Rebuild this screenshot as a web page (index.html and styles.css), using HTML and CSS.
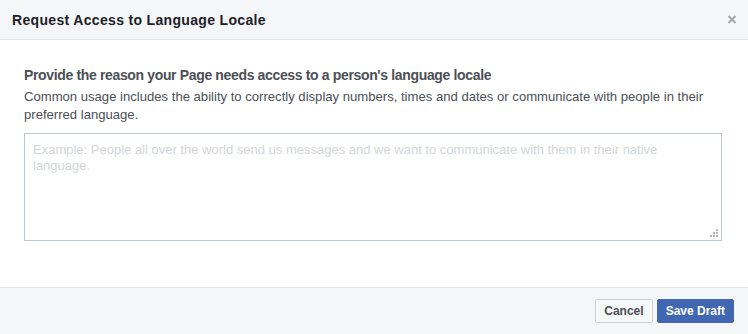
FILE: index.html
```html
<!DOCTYPE html>
<html lang="en">

<head>
    <meta charset="UTF-8">
    <title>Request Access to Language Locale</title>
    <link rel="stylesheet" href="styles.css">
</head>

<body>
    <div class="dialog">
        <div class="dialog-header">
            <span class="dialog-title">Request Access to Language Locale</span>
            <svg class="dialog-close" width="10" height="9" viewBox="0 0 10 9">
                <path d="M1.5 1 L8.5 8 M8.5 1 L1.5 8" stroke="#a4a7ab" stroke-width="2" fill="none" />
            </svg>
        </div>
        <div class="dialog-body">
            <div class="reason-title">Provide the reason your Page needs access to a person's language locale</div>
            <div class="reason-desc">Common usage includes the ability to correctly display numbers, times and dates or communicate with people in their preferred language.</div>
            <div class="input-wrap">
                <textarea class="reason-input" placeholder="Example: People all over the world send us messages and we want to communicate with them in their native language."></textarea>
                <!-- grip in the corner -->
                <svg class="grip" width="9" height="9" viewBox="0 0 9 9">
                    <rect x="6" y="0" width="2" height="2" fill="#b4b4b4" />
                    <rect x="3" y="3" width="2" height="2" fill="#b4b4b4" />
                    <rect x="6" y="3" width="2" height="2" fill="#b4b4b4" />
                    <rect x="0" y="6" width="2" height="2" fill="#b4b4b4" />
                    <rect x="3" y="6" width="2" height="2" fill="#b4b4b4" />
                    <rect x="6" y="6" width="2" height="2" fill="#b4b4b4" />
                </svg>
            </div>
        </div>
        <div class="dialog-footer">
            <button class="btn btn-cancel">Cancel</button>
            <button class="btn btn-save">Save Draft</button>
        </div>
    </div>
</body>

</html>
```

FILE: styles.css
```css
* {
    padding: 0;
    margin: 0;
    box-sizing: border-box;
}

body {
    background: #fff;
    font-family: "Liberation Sans", Arial, sans-serif;
    color: #1d2129;
}

.dialog {
    width: 748px;
    height: 334px;
    display: flex;
    flex-direction: column;
}

.dialog-header {
    height: 40px;
    background: #f5f6f7;
    border-bottom: 1px solid #e5e5e5;
    display: flex;
    align-items: center;
    justify-content: space-between;
    padding: 0 11px 0 12px;
}

.dialog-title {
    font-size: 14px;
    font-weight: bold;
    letter-spacing: 0.33px;
    color: #1d2129;
}

.dialog-close {
    display: block;
}

.dialog-body {
    flex: 1;
    padding: 26px 24px 0 24px;
}

.reason-title {
    font-size: 14px;
    font-weight: bold;
    color: #4b4f56;
    line-height: 18px;
    letter-spacing: -0.35px;
}

.reason-desc {
    font-size: 13.1px;
    color: #4b4f56;
    line-height: 18px;
    margin-top: 4px;
}

.input-wrap {
    position: relative;
    width: 698px;
    margin-top: 9px;
}

.reason-input {
    display: block;
    width: 698px;
    height: 108px;
    border: 1px solid #bdc7d8;
    padding: 8px 8px;
    font-family: "Liberation Sans", Arial, sans-serif;
    font-size: 13px;
    line-height: 16px;
    resize: none;
}

.reason-input::placeholder {
    color: #d3d6da;
}

.grip {
    position: absolute;
    right: 3px;
    bottom: 3px;
}

.dialog-footer {
    height: 47px;
    background: #f5f6f7;
    border-top: 1px solid #dddfe2;
    display: flex;
    align-items: center;
    justify-content: flex-end;
    gap: 4px;
    padding: 0 14px 0 0;
}

.btn {
    height: 24px;
    font-family: "Liberation Sans", Arial, sans-serif;
    font-size: 12px;
    font-weight: bold;
    border-radius: 2px;
    padding: 0 8px;
}

.btn-cancel {
    background: #f6f7f9;
    border: 1px solid #ced0d4;
    color: #4b4f56;
}

.btn-save {
    background: #4267b2;
    border: 1px solid #4267b2;
    color: #fff;
}
```
